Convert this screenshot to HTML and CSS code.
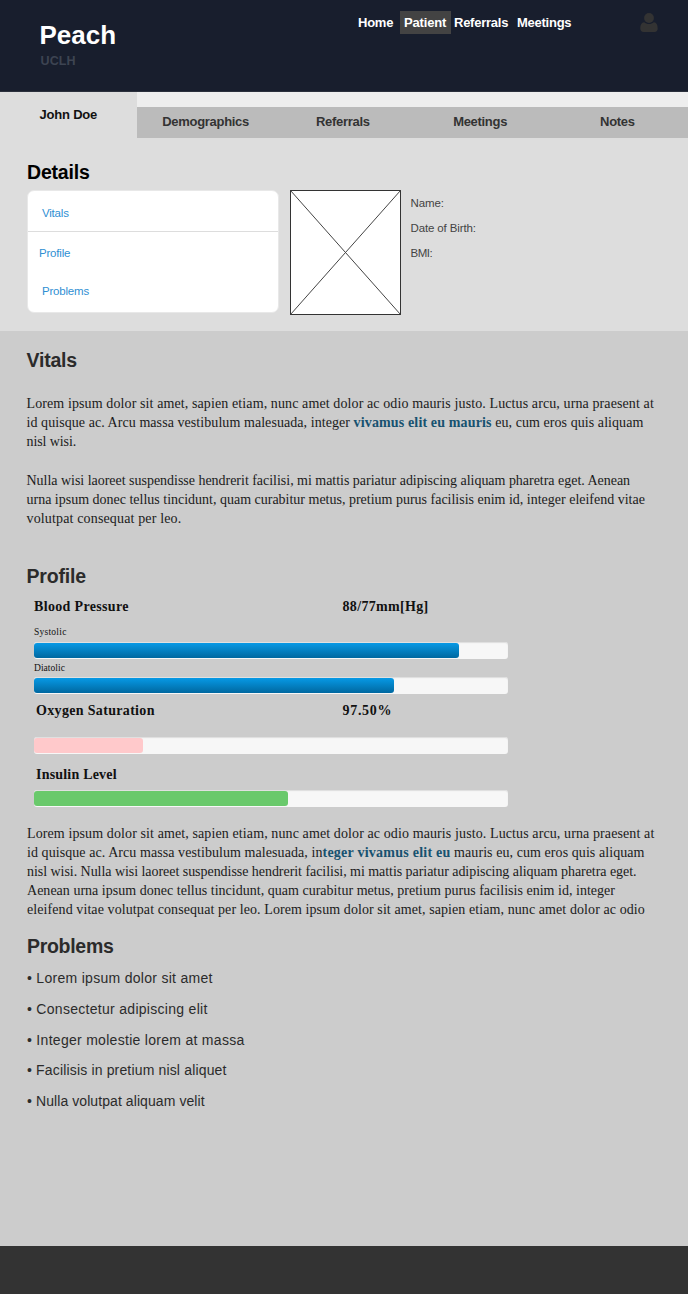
FILE: index.html
```html
<!DOCTYPE html>
<html lang="en">
<head>
<meta charset="utf-8">
<title>Peach</title>
<link rel="stylesheet" href="styles.css">
</head>
<body>
<header class="header">
  <div class="brand"><h1 class="brand-name">Peach</h1><div class="brand-site">UCLH</div></div>
  <nav class="nav">
    <a class="nav-item nav-home">Home</a><a class="nav-item nav-patient">Patient</a><a class="nav-item nav-referrals">Referrals</a><a class="nav-item nav-meetings">Meetings</a>
  </nav>
  <svg class="user" width="18" height="20" viewBox="0 0 18 20"><path d="M4.2 9.2C1.4 9.4.3 12 .3 15.600c0 2.300 1.200 3.500 3.200 3.500h11c2 0 3.200-1.200 3.200-3.500 0-3.600-1.100-6.200-3.900-6.400C12.500 10.300 11 11 9 11S5.500 10.300 4.200 9.200z"/><circle cx="9" cy="5" r="4.900"/></svg>
</header>
<div class="tabs">
  <div class="tab-current">John Doe</div>
  <div class="tab-list"><a>Demographics</a><a>Referrals</a><a>Meetings</a><a>Notes</a></div>
</div>
<section class="details">
  <h2 class="details-title">Details</h2>
  <div class="details-row">
    <ul class="menu"><li class="menu-first">Vitals</li><li class="menu-profile">Profile</li><li class="menu-problems">Problems</li></ul>
    <svg class="photo" width="111" height="125" viewBox="0 0 111 125"><rect x=".5" y=".5" width="110" height="124" fill="#fff" stroke="#333"/><path d="M.5.5l110 124M110.500.5L.5 124.500" fill="none" stroke="#444"/></svg>
    <div class="facts"><p>Name:</p><p>Date of Birth:</p><p class="fact-bmi">BMI:</p></div>
  </div>
</section>
<main class="content">
  <h2 class="vitals-title">Vitals</h2>
  <div class="copy">
    <p class="l1">Lorem ipsum dolor sit amet, sapien etiam, nunc amet dolor ac odio mauris justo. Luctus arcu, urna praesent at</p>
    <p class="l2">id quisque ac. Arcu massa vestibulum malesuada, integer <b>vivamus elit eu mauris</b> eu, cum eros quis aliquam</p>
    <p class="l3">nisl wisi.</p>
    <p class="gap"></p>
    <p class="l4">Nulla wisi laoreet suspendisse hendrerit facilisi, mi mattis pariatur adipiscing aliquam pharetra eget. Aenean</p>
    <p class="l5">urna ipsum donec tellus tincidunt, quam curabitur metus, pretium purus facilisis enim id, integer eleifend vitae</p>
    <p class="l6">volutpat consequat per leo.</p>
  </div>
  <h2 class="profile-title">Profile</h2>
  <div class="profile">
    <div class="measure measure-bp"><h3>Blood Pressure</h3><strong>88/77mm[Hg]</strong></div>
    <div class="bar-label label-systolic">Systolic</div>
    <div class="bar"><div class="fill blue" style="width:425px"></div></div>
    <div class="bar-label label-diatolic">Diatolic</div>
    <div class="bar"><div class="fill blue" style="width:360px"></div></div>
    <div class="measure measure-o2"><h3>Oxygen Saturation</h3><strong>97.50%</strong></div>
    <div class="bar"><div class="fill pink" style="width:109px"></div></div>
    <div class="measure measure-insulin"><h3>Insulin Level</h3></div>
    <div class="bar"><div class="fill green" style="width:254px"></div></div>
  </div>
  <div class="copy copy-profile">
    <p class="l1">Lorem ipsum dolor sit amet, sapien etiam, nunc amet dolor ac odio mauris justo. Luctus arcu, urna praesent at</p>
    <p class="l7">id quisque ac. Arcu massa vestibulum malesuada, in<b>teger vivamus elit eu</b> mauris eu, cum eros quis aliquam</p>
    <p class="l8">nisl wisi. Nulla wisi laoreet suspendisse hendrerit facilisi, mi mattis pariatur adipiscing aliquam pharetra eget.</p>
    <p class="l9">Aenean urna ipsum donec tellus tincidunt, quam curabitur metus, pretium purus facilisis enim id, integer</p>
    <p class="l10">eleifend vitae volutpat consequat per leo. Lorem ipsum dolor sit amet, sapien etiam, nunc amet dolor ac odio</p>
  </div>
  <h2 class="problems-title">Problems</h2>
  <ul class="problems">
    <li>• Lorem ipsum dolor sit amet</li>
    <li>• Consectetur adipiscing elit</li>
    <li>• Integer molestie lorem at massa</li>
    <li class="tight">• Facilisis in pretium nisl aliquet</li>
    <li class="tighter">• Nulla volutpat aliquam velit</li>
  </ul>
</main>
<footer class="footer"></footer>
</body>
</html>
```
FILE: styles.css
```css
* { box-sizing: border-box; }
body { margin: 0; width: 688px; font-family: "Liberation Sans", Arial, sans-serif; color: #333; white-space: nowrap; }
h1, h2, h3, p, ul { margin: 0; padding: 0; list-style: none; }

.header { display: flex; height: 92px; background: #181e2d; border-bottom: 1px solid #2b303c; }
.brand { width: 357px; padding: 20px 0 0 39.500px; }
.brand-name { font-size: 26px; line-height: 31px; color: #fff; }
.brand-site { padding-left: 1px; font-size: 12.500px; line-height: 20px; font-weight: bold; color: #3d4452; letter-spacing: .1px; }
.nav { display: flex; width: 283px; height: 23px; margin-top: 11px; font-size: 13px; line-height: 23px; letter-spacing: -.25px; font-weight: bold; color: #fff; }
.nav-home { width: 43px; padding-left: 1px; }
.nav-patient { width: 51px; padding-left: 4px; background: #434343; letter-spacing: -.15px; }
.nav-referrals { width: 63px; padding-left: 3px; }
.nav-meetings { padding-left: 3px; }
.user { margin-top: 13px; fill: #333; }

.tabs { display: flex; height: 46px; background: #eee; font-size: 13px; font-weight: bold; }
.tab-current { width: 137px; padding: 15px 0 0 39.500px; line-height: 16px; letter-spacing: -.2px; background: #ddd; color: #111; }
.tab-list { display: grid; grid-template-columns: repeat(4, 1fr); width: 551px; height: 31px; margin-top: 15px; padding-right: 2px; letter-spacing: -.3px; background: #bbb; line-height: 30px; text-align: center; }

.details { height: 193px; padding: 22px 27px 0; background: #ddd; }
.details-title { height: 30px; font-size: 19.500px; letter-spacing: -.2px; line-height: 24px; color: #000; }
.details-row { display: flex; }
.menu { width: 252px; height: 123px; border: 1px solid #e8e8e8; border-radius: 7px; background: #fff; font-size: 11.500px; letter-spacing: -.2px; color: #2f8fd3; }
.menu-first { height: 41px; padding-left: 14px; line-height: 45px; border-bottom: 1px solid #ddd; }
.menu-profile { height: 39px; padding-left: 11px; line-height: 43px; }
.menu-problems { padding-left: 14px; line-height: 41px; }
.photo { margin-left: 11px; }
.facts { padding: 1px 0 0 9.500px; font-size: 11.500px; letter-spacing: -.13px; line-height: 25px; color: #444; }
.fact-bmi { letter-spacing: -.5px; }

.content { height: 915px; padding: 17px 0 0 26.500px; background: #ccc; }
.content h2 { font-size: 19.500px; letter-spacing: -.2px; line-height: 24px; color: #2b2b2b; }
.vitals-title { height: 46px; }
.copy { font-family: "Liberation Serif", "Times New Roman", serif; font-size: 14px; line-height: 19.2px; color: #1b1b1b; }
.copy p { height: 19.2px; }
.copy b { color: #175270; }
.l1 { letter-spacing: .106px; }
.l2 { letter-spacing: .065px; }
.l2 b { letter-spacing: .14px; }
.l3 { letter-spacing: -.1px; }
.l4 { letter-spacing: -.023px; }
.l5 { letter-spacing: -.005px; }
.l6 { letter-spacing: .15px; }
.l7 { letter-spacing: .07px; }
.l7 b { letter-spacing: .24px; }
.l8 { letter-spacing: -.045px; }
.l9 { letter-spacing: .02px; }
.l10 { letter-spacing: .084px; }
.content .profile-title { margin-top: 35.600px; height: 33px; }
.profile { width: 475px; margin-left: 7.500px; font-family: "Liberation Serif", "Times New Roman", serif; color: #111; }
.measure { display: grid; grid-template-columns: 308.5px 1fr; font-size: 14px; line-height: 20px; letter-spacing: .33px; }
.measure h3 { font-size: 14px; }
.measure-bp { height: 30px; }
.measure-o2 strong { letter-spacing: .7px; }
.bar-label { height: 15px; font-size: 9.500px; line-height: 11px; letter-spacing: .05px; }
.label-systolic { letter-spacing: .25px; }
.label-diatolic { padding-top: 4px; height: 18px; }
.bar { width: 474px; height: 17px; border-radius: 3px; background: #f7f7f7; box-shadow: inset 0 1px 1px #ddd; padding-top: 1px; }
.fill { height: 15px; border-radius: 3px; }
.blue { background: linear-gradient(#0799e5, #0068a0); }
.pink { background: #ffc9cb; }
.green { background: #69c96b; }
.measure-o2 { height: 43px; padding-top: 7px; }
.measure-o2 h3, .measure-insulin h3 { padding-left: 2px; }
.measure-insulin { height: 36px; padding-top: 11px; letter-spacing: .2px; }
.copy-profile { padding: 16.600px 0 0 .5px; }
.content .problems-title { padding-left: .5px; margin-top: 15px; height: 35px; letter-spacing: -.3px; }
.problems { padding-left: .5px; font-size: 14px; line-height: 18px; letter-spacing: .29px; color: #2b2b2b; }
.problems li { height: 30.6px; }
.tight { letter-spacing: .16px; }
.tighter { letter-spacing: .08px; }
.footer { height: 48px; background: #333; }
```
